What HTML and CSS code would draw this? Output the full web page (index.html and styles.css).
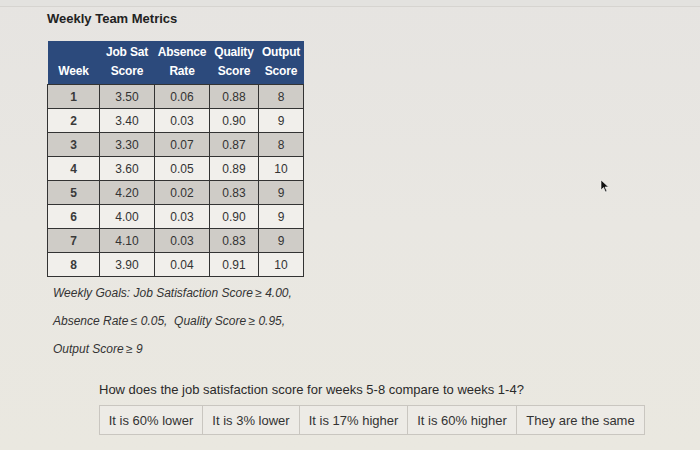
FILE: index.html
```html
<!DOCTYPE html>
<html>
<head>
<meta charset="utf-8">
<link rel="stylesheet" href="styles.css">
</head>
<body>
<div class="page">
  <div class="topbar"></div>
  <h1 class="title">Weekly Team Metrics</h1>
  <table class="metrics">
    <thead>
      <tr>
        <th class="c-week">Week</th>
        <th class="c-js">Job Sat<br>Score</th>
        <th class="c-ab">Absence<br>Rate</th>
        <th class="c-q">Quality<br>Score</th>
        <th class="c-o">Output<br>Score</th>
      </tr>
    </thead>
    <tbody>
      <tr class="odd"><td class="wk">1</td><td>3.50</td><td>0.06</td><td>0.88</td><td>8</td></tr>
      <tr><td class="wk">2</td><td>3.40</td><td>0.03</td><td>0.90</td><td>9</td></tr>
      <tr class="odd"><td class="wk">3</td><td>3.30</td><td>0.07</td><td>0.87</td><td>8</td></tr>
      <tr><td class="wk">4</td><td>3.60</td><td>0.05</td><td>0.89</td><td>10</td></tr>
      <tr class="odd"><td class="wk">5</td><td>4.20</td><td>0.02</td><td>0.83</td><td>9</td></tr>
      <tr><td class="wk">6</td><td>4.00</td><td>0.03</td><td>0.90</td><td>9</td></tr>
      <tr class="odd"><td class="wk">7</td><td>4.10</td><td>0.03</td><td>0.83</td><td>9</td></tr>
      <tr><td class="wk">8</td><td>3.90</td><td>0.04</td><td>0.91</td><td>10</td></tr>
    </tbody>
  </table>
  <div class="goals">
    <p>Weekly Goals: Job Satisfaction Score&thinsp;&ge; 4.00,</p>
    <p>Absence Rate&thinsp;&le; 0.05,&nbsp; Quality Score&thinsp;&ge; 0.95,</p>
    <p>Output Score&thinsp;&ge; 9</p>
  </div>
  <div class="question">
    <p class="q-text">How does the job satisfaction score for weeks 5-8 compare to weeks 1-4?</p>
    <div class="options">
      <button class="opt w1">It is 60% lower</button>
      <button class="opt w2">It is 3% lower</button>
      <button class="opt w3">It is 17% higher</button>
      <button class="opt w4">It is 60% higher</button>
      <button class="opt w5">They are the same</button>
    </div>
  </div>
  <svg class="cursor" width="10" height="14" viewBox="0 0 10 14"><path d="M1 1 L1 11 L3.5 8.5 L5.5 13 L7 12.3 L5 8 L8.5 8 Z" fill="#111" stroke="#fff" stroke-width="0.6"/></svg>
</div>
</body>
</html>
```

FILE: styles.css
```css
html, body {
  margin: 0;
  padding: 0;
}
body {
  width: 700px;
  height: 450px;
  overflow: hidden;
  background: linear-gradient(180deg, #e6e4e1 0%, #e9e7e2 50%, #eae8e0 100%);
  font-family: "Liberation Sans", Arial, sans-serif;
  color: #2a2a2a;
}
.page {
  position: relative;
  height: 450px;
  padding: 0 0 0 47px;
  box-sizing: border-box;
}
.topbar {
  height: 6px;
  border-bottom: 1px solid #d6d4d0;
  margin-left: -47px;
  background: #e3e2df;
}
.title {
  margin: 4px 0 0 0;
  font-size: 13px;
  font-weight: bold;
  line-height: 16px;
  color: #222;
}
.metrics {
  margin-top: 14px;
  border-collapse: collapse;
  font-size: 12px;
  color: #333;
}
.metrics th {
  background: #2c4a7c;
  color: #fff;
  font-weight: bold;
  font-size: 12px;
  line-height: 19px;
  vertical-align: bottom;
  padding: 2px 0 3px;
  text-align: center;
  letter-spacing: -0.2px;
}
.metrics th.c-week { width: 52px; }
.metrics th.c-js { width: 55px; }
.metrics th.c-ab { width: 55px; }
.metrics th.c-q { width: 49px; }
.metrics th.c-o { width: 45px; }
.metrics td {
  border: 1.5px solid #333;
  height: 23px;
  padding: 0;
  text-align: center;
  background: #f1efeb;
}
.metrics tr.odd td {
  background: #cfccc7;
}
.metrics td.wk {
  font-weight: bold;
  color: #3a3a3a;
}
.goals {
  margin-top: 2px;
  padding-left: 6px;
  font-style: italic;
  font-size: 12px;
  color: #333;
}
.goals p {
  margin: 0;
  line-height: 28px;
}
.question {
  margin-top: 19px;
  padding-left: 52px;
}
.q-text {
  margin: 0 0 7px 0;
  font-size: 13px;
  line-height: 16px;
  color: #2a2a2a;
}
.options {
  display: flex;
}
.opt {
  height: 30px;
  background: #edebe6;
  border: 1px solid #c9c6c0;
  border-left: none;
  font-family: "Liberation Sans", Arial, sans-serif;
  font-size: 13px;
  color: #333;
  padding: 0;
  text-align: center;
}
.opt.w1 { width: 104px; border-left: 1px solid #c9c6c0; }
.opt.w2 { width: 97px; }
.opt.w3 { width: 108px; }
.opt.w4 { width: 109px; }
.opt.w5 { width: 128px; }
.cursor {
  position: absolute;
  left: 600px;
  top: 179px;
}
```
